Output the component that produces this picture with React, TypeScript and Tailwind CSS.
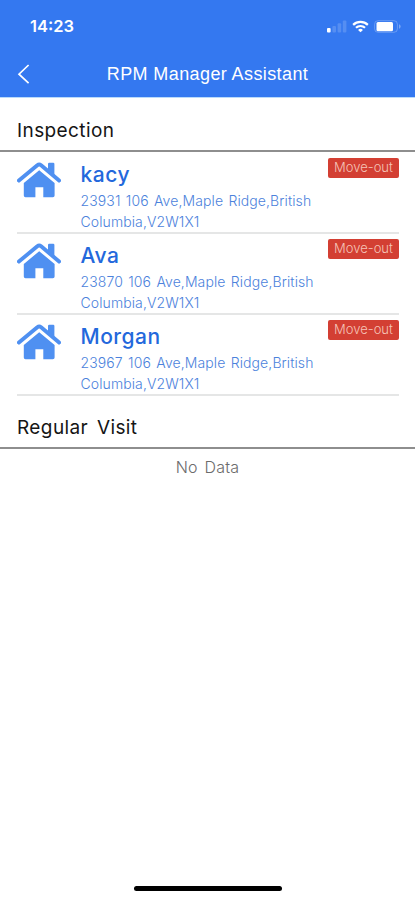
type Visit = {
  id: number;
  name: string;
  street: string;
  city: string;
  status: string;
};

const inspections: Visit[] = [
  { id: 1, name: "kacy", street: "23931 106 Ave,Maple Ridge,British", city: "Columbia,V2W1X1", status: "Move-out" },
  { id: 2, name: "Ava", street: "23870 106 Ave,Maple Ridge,British", city: "Columbia,V2W1X1", status: "Move-out" },
  { id: 3, name: "Morgan", street: "23967 106 Ave,Maple Ridge,British", city: "Columbia,V2W1X1", status: "Move-out" },
];

function HouseIcon() {
  return (
    <svg viewBox="0 0 44 36" className="h-9 w-11 shrink-0 text-[#4f90f1]" fill="currentColor">
      <path d="M31 1.9q0-1.2 1.2-1.2h4q1.2 0 1.2 1.2V14L31 8.6z" />
      <path
        d="M1.9 18.6 20.3 3.2q1.9-1.5 3.8 0l18 15.4"
        fill="none"
        stroke="currentColor"
        strokeWidth="3.9"
        strokeLinecap="round"
        strokeLinejoin="round"
      />
      <path d="M22.2 8.2 37.6 21v12.6q0 1.7-1.7 1.7h-9.6V25.2h-7.9v10.1H8.5q-1.7 0-1.7-1.7V21z" />
    </svg>
  );
}

function StatusIcons() {
  return (
    <div className="flex items-center">
      <svg viewBox="0 0 20 13" className="h-[13px] w-5" fill="#fff">
        <rect x="0" y="8" width="3.6" height="4.5" rx="1" />
        <g opacity="0.16">
          <rect x="5.4" y="6" width="3.6" height="6.5" rx="1" />
          <rect x="10.6" y="3.3" width="3.6" height="9.2" rx="1" />
          <rect x="15.8" y="0.6" width="3.6" height="11.9" rx="1" />
        </g>
      </svg>
      <svg viewBox="0 0 18 13" className="ml-[5px] h-[13px] w-[17px]" fill="none" stroke="#fff" strokeWidth="2.3">
        <path d="M1.2 4.8a11.2 11.2 0 0 1 15.6 0" />
        <path d="M4.2 7.9a6.9 6.9 0 0 1 9.6 0" />
        <path d="M9 12.7 6.4 10.1a3.8 3.8 0 0 1 5.2 0z" fill="#fff" stroke="none" />
      </svg>
      <svg viewBox="0 0 28 13" className="ml-[5px] h-[13px] w-7">
        <rect x="0.6" y="0.7" width="22.8" height="11.6" rx="3.5" fill="none" stroke="#fff" strokeOpacity="0.25" />
        <rect x="2.5" y="2" width="16.5" height="9.2" rx="1.5" fill="#fff" />
        <path d="M25 4.3a2.3 2.3 0 0 1 0 4.4z" fill="#fff" opacity="0.35" />
      </svg>
    </div>
  );
}

function Header() {
  return (
    <header className="h-[98px] border-b border-[#b9dafb] bg-[#3478f0] text-white">
      <div className="flex h-[52px] items-center justify-between pr-[13px] pl-[30px]">
        <span className="font-['Inter'] text-[16.5px] font-semibold">14:23</span>
        <StatusIcons />
      </div>
      <div className="grid h-[44px] grid-cols-[60px_1fr_60px] items-center">
        <button type="button" aria-label="Back" className="pl-[17px]">
          <svg viewBox="0 0 13 20" className="h-5 w-[13px]" fill="none" stroke="#fff" strokeWidth="1.7">
            <path d="M11.6 1 2 10.2l9.6 9" />
          </svg>
        </button>
        <h1 className="text-center font-['Liberation_Sans'] text-[18px] tracking-[0.4px] whitespace-nowrap">
          RPM Manager Assistant
        </h1>
      </div>
    </header>
  );
}

function SectionTitle({ title }: { title: string }) {
  return (
    <h2 className="flex h-[54px] items-center border-b-2 border-[#8e8e8e] px-[17px] pt-3.5 text-[19px] tracking-[0.4px] text-[#151515] [word-spacing:3px]">
      {title}
    </h2>
  );
}

function VisitRow({ visit }: { visit: Visit }) {
  return (
    <li className="flex h-[81px] items-start border-b-2 border-[#e5e6e6] pt-[9px]">
      <HouseIcon />
      <div className="ml-[19.5px] min-w-0 flex-1 whitespace-nowrap">
        <p className="mb-0.5 text-[21px] leading-[26px] font-medium tracking-[0.5px] text-[#2368dc]">{visit.name}</p>
        <p className="text-[14px] leading-[21px] font-light tracking-[0.1px] text-[#4c82dc] [word-spacing:1.3px]">
          {visit.street}
        </p>
        <p className="text-[14px] leading-[21px] font-light tracking-[0.1px] text-[#4c82dc]">{visit.city}</p>
      </div>
      <span className="-mt-[4px] -ml-[80px] flex h-5 w-[71px] shrink-0 items-center justify-center rounded-[2px] bg-[#d33f33] text-[13px] font-light text-[#f5c4b8]">
        {visit.status}
      </span>
    </li>
  );
}

export default function App() {
  return (
    <div className="flex h-[900px] w-[415px] flex-col bg-white font-['Inter',sans-serif]">
      <Header />
      <main className="flex-1">
        <SectionTitle title="Inspection" />
        <ul className="-mb-px pt-px pr-4 pl-[17px]">
          {inspections.map((visit) => (
            <VisitRow key={visit.id} visit={visit} />
          ))}
        </ul>
        <SectionTitle title="Regular Visit" />
        <p className="pt-1.5 text-center text-[16px] leading-6 font-light tracking-[0.2px] text-[#6c6c6c] [word-spacing:2px]">
          No Data
        </p>
      </main>
      <div className="mx-auto mb-[9px] h-[5px] w-[148px] rounded-full bg-black" />
    </div>
  );
}
